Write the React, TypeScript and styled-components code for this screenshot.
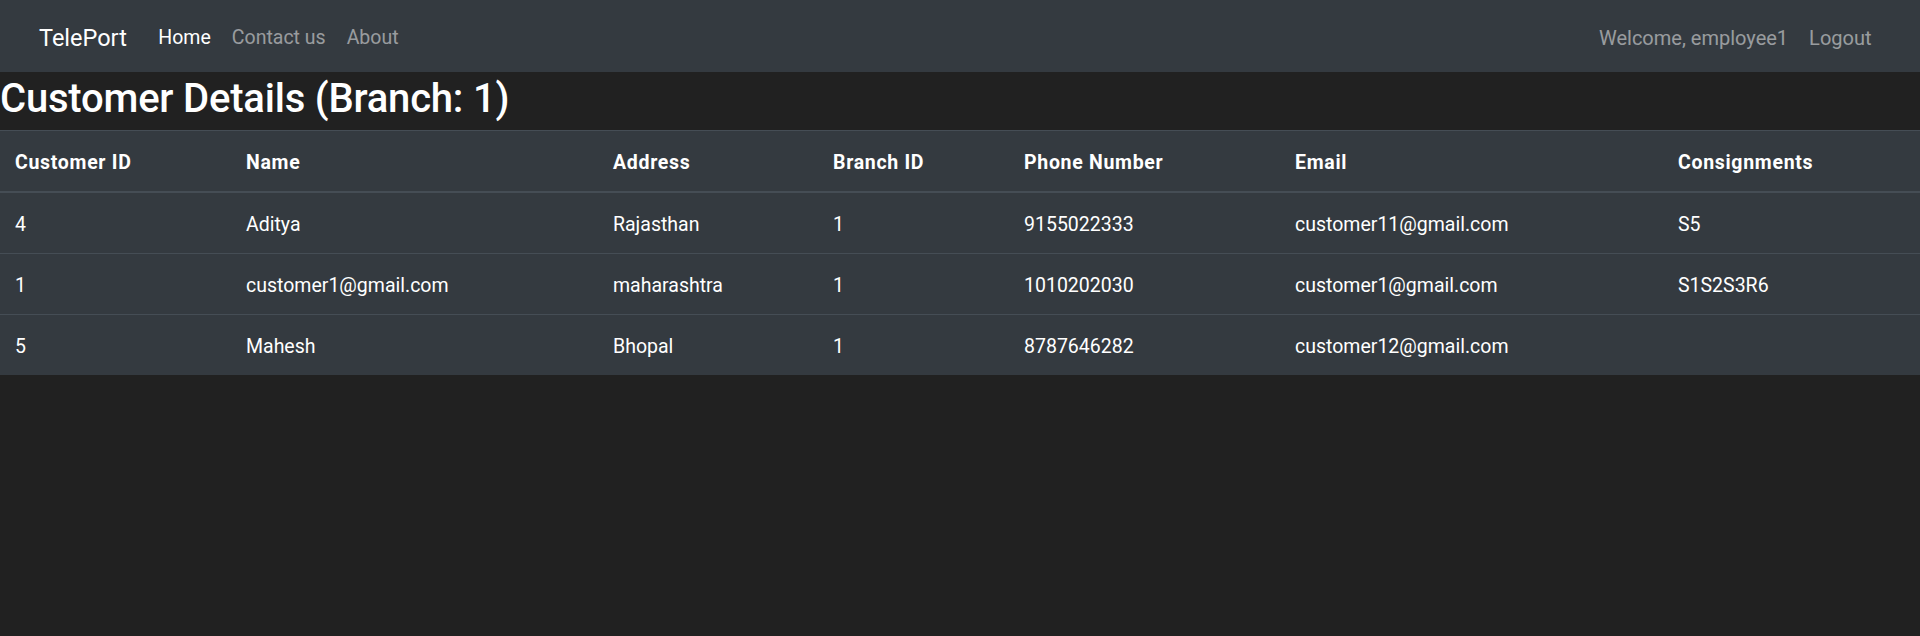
import React from "react";
import styled, { createGlobalStyle } from "styled-components";

const GlobalStyle = createGlobalStyle`
  html, body {
    margin: 0;
    padding: 0;
    background: #212121;
    color: #ffffff;
    font-family: Roboto, "Liberation Sans", Arial, sans-serif;
  }
  * { box-sizing: border-box; }
`;

const NavBar = styled.nav`
  display: flex;
  align-items: center;
  height: 72px;
  padding: 4px 38px 0 39px;
  background: #343a40;
`;

const Brand = styled.a`
  font-size: 23.5px;
  color: #ffffff;
  text-decoration: none;
  margin-right: 21px;
  white-space: nowrap;
`;

const NavList = styled.div`
  display: flex;
  align-items: center;
`;

const RightList = styled(NavList)`
  margin-left: auto;
`;

const NavLink = styled.a<{ $active?: boolean }>`
  font-size: 19.5px;
  padding: 0 10.5px;
  line-height: 30px;
  text-decoration: none;
  white-space: nowrap;
  color: ${(p) => (p.$active ? "#ffffff" : "rgba(255,255,255,0.5)")};
`;

const RightLink = styled(NavLink)`
  font-size: 20px;
`;

const Title = styled.h1`
  margin: 0 0 7px;
  padding-top: 3px;
  font-size: 40px;
  font-weight: 500;
  letter-spacing: -0.2px;
  line-height: 48px;
  color: #ffffff;
`;

const Table = styled.table`
  width: 100%;
  table-layout: fixed;
  border-collapse: collapse;
  background: #343a40;
  color: #ffffff;
  font-size: 19.5px;
`;

const HeadCell = styled.th`
  text-align: left;
  font-weight: 700;
  letter-spacing: 0.7px;
  padding: 17px 15px 13px;
  line-height: 30px;
  border-top: 1px solid #454d55;
  border-bottom: 2px solid #454d55;
  white-space: nowrap;
`;

const Cell = styled.td`
  padding: 17px 15px 13px;
  line-height: 30px;
  border-top: 1px solid #454d55;
  white-space: nowrap;
`;

const columns: { label: string; width: number }[] = [
  { label: "Customer ID", width: 231 },
  { label: "Name", width: 367 },
  { label: "Address", width: 220 },
  { label: "Branch ID", width: 191 },
  { label: "Phone Number", width: 271 },
  { label: "Email", width: 383 },
  { label: "Consignments", width: 257 },
];

const rows: string[][] = [
  ["4", "Aditya", "Rajasthan", "1", "9155022333", "customer11@gmail.com", "S5"],
  ["1", "customer1@gmail.com", "maharashtra", "1", "1010202030", "customer1@gmail.com", "S1S2S3R6"],
  ["5", "Mahesh", "Bhopal", "1", "8787646282", "customer12@gmail.com", ""],
];

export default function App() {
  return (
    <>
      <GlobalStyle />
      <NavBar>
        <Brand href="#">TelePort</Brand>
        <NavList>
          <NavLink href="#" $active>Home</NavLink>
          <NavLink href="#">Contact us</NavLink>
          <NavLink href="#">About</NavLink>
        </NavList>
        <RightList>
          <RightLink href="#">Welcome, employee1</RightLink>
          <RightLink href="#">Logout</RightLink>
        </RightList>
      </NavBar>
      <Title>Customer Details (Branch: 1)</Title>
      <Table>
        <colgroup>
          {columns.map((c) => (
            <col key={c.label} style={{ width: c.width }} />
          ))}
        </colgroup>
        <thead>
          <tr>
            {columns.map((c) => (
              <HeadCell key={c.label}>{c.label}</HeadCell>
            ))}
          </tr>
        </thead>
        <tbody>
          {rows.map((r, i) => (
            <tr key={i}>
              {r.map((v, j) => (
                <Cell key={j}>{v}</Cell>
              ))}
            </tr>
          ))}
        </tbody>
      </Table>
    </>
  );
}
